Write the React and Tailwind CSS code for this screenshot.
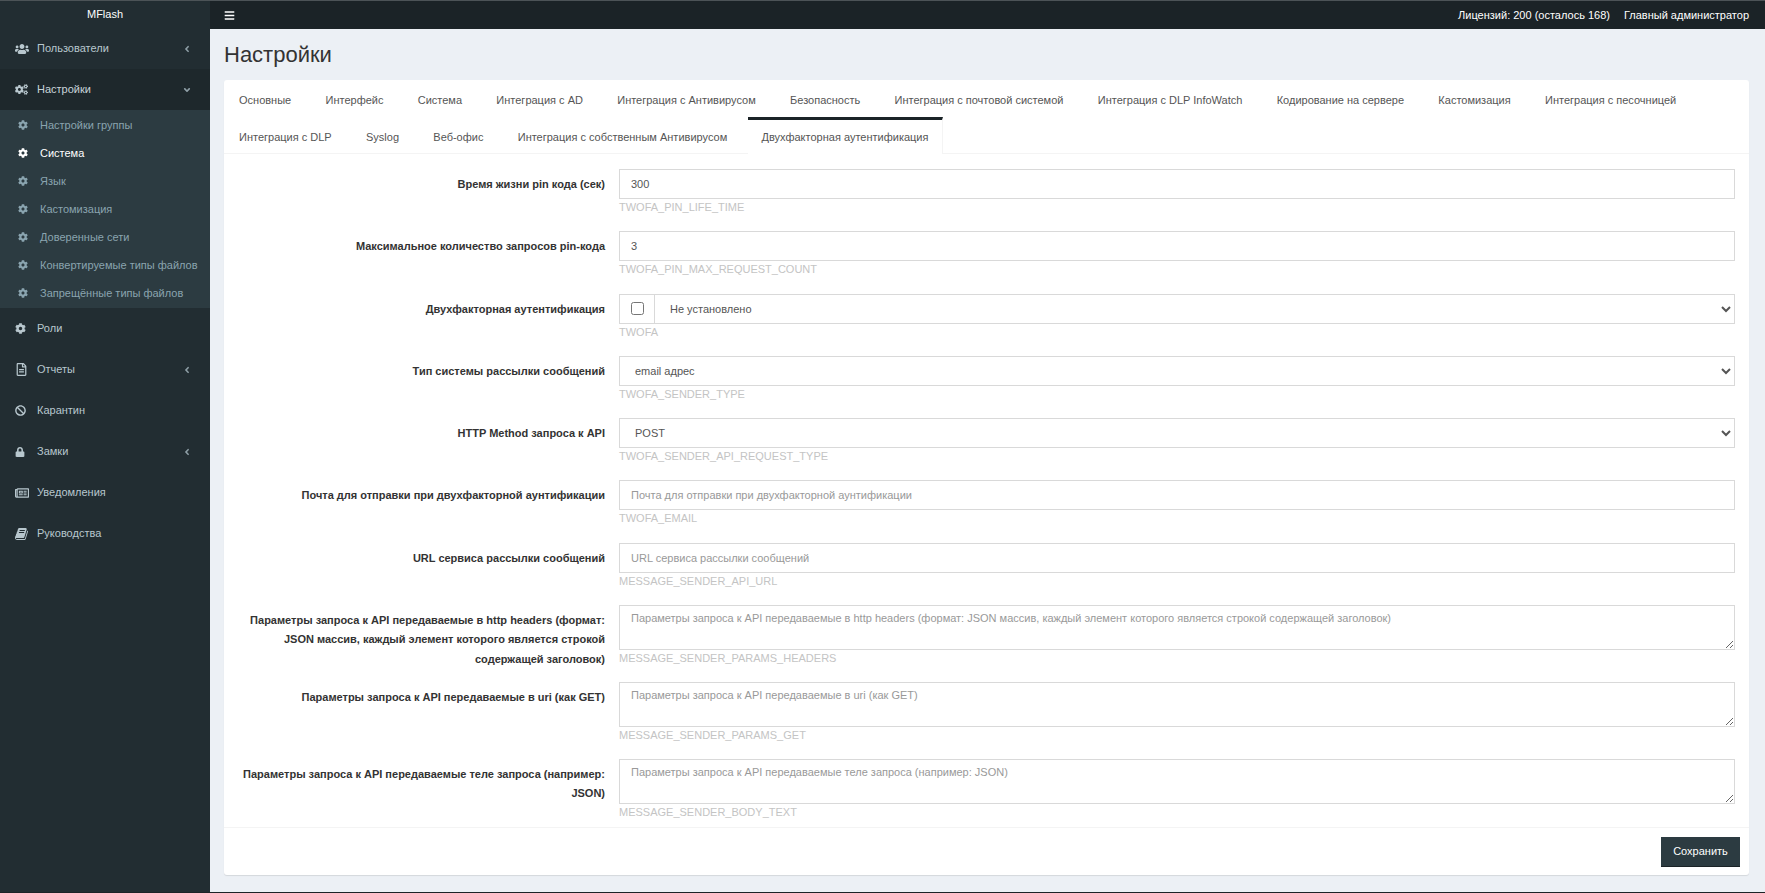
import { FaUsers, FaCogs, FaCog, FaRegFileAlt, FaBan, FaLock, FaRegNewspaper, FaBars, FaAngleLeft, FaAngleDown } from 'react-icons/fa'

// slanted book, the react-icons one is upright
function BookIcon({ size }) {
  return (
    <svg width={size} height={size} viewBox="0 0 1792 1792" fill="currentColor">
      <path d="M1639 478q40 57 18 129l-275 906q-19 64-76.5 107.5t-122.5 43.5h-923q-77 0-148.5-53.5t-99.5-131.5q-24-67-2-127 0-4 3-27t4-37q1-8-3-21.5t-3-19.5q2-11 8-21t16.5-23.5 16.5-23.5q23-38 45-91.5t30-91.5q3-10 .5-30t-.5-28q3-11 17-28t17-23q21-36 42-92t25-90q1-9-2.5-32t.5-28q4-13 22-30.5t22-22.5q19-26 42.5-84.5t27.5-96.5q1-8-3-25.5t-2-26.5q2-8 9-18t18-23 17-21q8-12 16.5-30.5t15-35 16-36 19.5-32 26.5-23.5 36-11.5 47.5 5.5l-1 3q38-9 51-9h761q74 0 114 56t18 130l-274 906q-36 119-71.5 153.5t-128.5 34.5h-869q-27 0-38 15-11 16-1 43 24 70 144 70h923q29 0 56-15.5t35-41.5l300-987q7-22 5-57 38 15 59 43zm-1064 2q-4 13 2 22.5t20 9.5h608q13 0 25.5-9.5t16.5-22.5l21-64q4-13-2-22.5t-20-9.5h-608q-13 0-25.5 9.5t-16.5 22.5zm-83 256q-4 13 2 22.5t20 9.5h608q13 0 25.5-9.5t16.5-22.5l21-64q4-13-2-22.5t-20-9.5h-608q-13 0-25.5 9.5t-16.5 22.5z" />
    </svg>
  )
}

const subItems = [
  { label: 'Настройки группы' },
  { label: 'Система', active: true },
  { label: 'Язык' },
  { label: 'Кастомизация' },
  { label: 'Доверенные сети' },
  { label: 'Конвертируемые типы файлов' },
  { label: 'Запрещённые типы файлов' },
]

const menuBottom = [
  { label: 'Роли', icon: FaCog, size: 11 },
  { label: 'Отчеты', icon: FaRegFileAlt, arrow: true, size: 13 },
  { label: 'Карантин', icon: FaBan, size: 11 },
  { label: 'Замки', icon: FaLock, arrow: true, size: 10 },
  { label: 'Уведомления', icon: FaRegNewspaper, size: 14 },
  { label: 'Руководства', icon: BookIcon, size: 14 },
]

const tabRow1 = ['Основные', 'Интерфейс', 'Система', 'Интеграция с AD', 'Интеграция с Антивирусом', 'Безопасность', 'Интеграция с почтовой системой', 'Интеграция с DLP InfoWatch', 'Кодирование на сервере', 'Кастомизация', 'Интеграция с песочницей']
const tabRow2 = ['Интеграция с DLP', 'Syslog', 'Веб-офис', 'Интеграция с собственным Антивирусом']

function MenuItem({ icon: Icon, label, arrow, open, size = 13 }) {
  return (
    <div className={`h-[41px] flex items-center pl-[15px] pr-[15px] text-[11px] text-[#b8c7ce] ${open ? 'bg-[#1e282c]' : ''}`}>
      <span className="w-[22px] flex"><Icon size={size} /></span>
      <span className={open ? 'text-[#c8d4da]' : ''}>{label}</span>
      {arrow && <span className="ml-auto mr-[3px] text-[#8f9fa7]">{open ? <FaAngleDown size={10} /> : <FaAngleLeft size={10} />}</span>}
    </div>
  )
}

function Sidebar() {
  return (
    <aside className="w-[210px] shrink-0 bg-[#222d32] flex flex-col">
      <div className="h-[27px] flex items-center justify-center text-white text-[11px]">MFlash</div>
      <MenuItem icon={FaUsers} label="Пользователи" arrow size={14} />
      <MenuItem icon={FaCogs} label="Настройки" arrow open />
      <div className="bg-[#2c3b41] h-[198px] flex flex-col py-px">
        {subItems.map(item => (
          <div key={item.label} className={`flex-1 flex items-center pl-[18px] text-[11px] ${item.active ? 'text-white' : 'text-[#8aa4af]'}`}>
            <span className="w-[22px] flex"><FaCog size={10} /></span>
            <span>{item.label}</span>
          </div>
        ))}
      </div>
      {menuBottom.map(item => <MenuItem key={item.label} {...item} />)}
    </aside>
  )
}

function Field({ label, help, children, tall }) {
  return (
    <div className={`flex ${tall ? 'h-[77px]' : 'h-[62.25px]'}`}>
      <label className="w-[395px] shrink-0 pl-[14px] pr-[14px] pt-[6px] text-right text-[11px] font-bold leading-[19.5px] text-[#333]">{label}</label>
      <div className="flex-1 min-w-0 mr-[14px]">
        {children}
        <div className="text-[11px] leading-[17px] text-[#c4c4c4]">{help}</div>
      </div>
    </div>
  )
}

const controlClass = 'w-full h-[30px] border border-[#d9d9d9] px-[11px] text-[11px] text-[#555] bg-white outline-none placeholder:text-[#999]'

function TextField({ label, help, value, placeholder }) {
  return (
    <Field label={label} help={help}>
      <input className={controlClass} defaultValue={value} placeholder={placeholder} />
    </Field>
  )
}

function SelectField({ label, help, value }) {
  return (
    <Field label={label} help={help}>
      <select className={controlClass} defaultValue={value}>
        <option>{value}</option>
      </select>
    </Field>
  )
}

function AreaField({ label, help }) {
  return (
    <Field label={label} help={help} tall>
      <textarea className="block w-full h-[45px] border border-[#d9d9d9] px-[11px] py-[4px] text-[11px] text-[#555] bg-white outline-none placeholder:text-[#999]" placeholder={label} />
    </Field>
  )
}

export default function App() {
  return (
    <div className="h-[893px] flex flex-col overflow-hidden bg-[#ecf0f5] border-t border-b border-t-[#4c5357] border-b-[#1c2327] font-['Liberation_Sans',Arial,sans-serif]">
      <div className="flex flex-1 min-h-0">
        <Sidebar />
        <main className="flex-1 min-w-0 flex flex-col">
          <header className="h-[28px] shrink-0 bg-[#1b2327] flex items-center text-white text-[11px] pl-[14px] pr-4">
            <FaBars size={11} />
            <span className="ml-auto">Лицензий: 200 (осталось 168)</span>
            <span className="ml-[14px]">Главный администратор</span>
          </header>
          <div className="flex-1 min-h-0 pl-[14px] pr-4 flex flex-col">
            <h1 className="h-[51px] shrink-0 flex items-center text-[22px] text-[#333]">Настройки</h1>
            <div className="h-[795px] shrink-0 bg-white rounded-[3px] shadow-[0_1px_1px_rgba(0,0,0,0.1)] flex flex-col">
              <div className="h-[74px] shrink-0 border-b border-[#f4f4f4]">
                <div className="h-[37px] flex gap-[34.3px] px-[15px] pt-[12px] text-[11px] text-[#555]">
                  {tabRow1.map(t => <div key={t}>{t}</div>)}
                </div>
                <div className="h-[37px] flex gap-[34.3px] pl-[15px] text-[11px] text-[#555]">
                  {tabRow2.map(t => <div key={t} className="pt-[12px]">{t}</div>)}
                  <div className="-ml-[14px] bg-white border-t-[3px] border-t-[#1b2327] border-r border-r-[#f4f4f4] h-[37px] px-[14px] pt-[9px]">Двухфакторная аутентификация</div>
                </div>
              </div>
              <form className="flex-1 min-h-0 pt-[15px]">
                <TextField label="Время жизни pin кода (сек)" help="TWOFA_PIN_LIFE_TIME" value="300" />
                <TextField label="Максимальное количество запросов pin-кода" help="TWOFA_PIN_MAX_REQUEST_COUNT" value="3" />
                <Field label="Двухфакторная аутентификация" help="TWOFA">
                  <div className="flex h-[30px] border border-[#d9d9d9]">
                    <div className="w-[35px] shrink-0 flex items-center justify-center border-r border-[#d9d9d9]">
                      <input type="checkbox" className="w-[13px] h-[13px]" />
                    </div>
                    <select className="flex-1 min-w-0 pl-[11px] text-[11px] text-[#555] bg-white outline-none" defaultValue="Не установлено">
                      <option>Не установлено</option>
                    </select>
                  </div>
                </Field>
                <SelectField label="Тип системы рассылки сообщений" help="TWOFA_SENDER_TYPE" value="email адрес" />
                <SelectField label="HTTP Method запроса к API" help="TWOFA_SENDER_API_REQUEST_TYPE" value="POST" />
                <TextField label="Почта для отправки при двухфакторной аунтификации" help="TWOFA_EMAIL" placeholder="Почта для отправки при двухфакторной аунтификации" />
                <TextField label="URL сервиса рассылки сообщений" help="MESSAGE_SENDER_API_URL" placeholder="URL сервиса рассылки сообщений" />
                <AreaField label="Параметры запроса к API передаваемые в http headers (формат: JSON массив, каждый элемент которого является строкой содержащей заголовок)" help="MESSAGE_SENDER_PARAMS_HEADERS" />
                <AreaField label="Параметры запроса к API передаваемые в uri (как GET)" help="MESSAGE_SENDER_PARAMS_GET" />
                <AreaField label="Параметры запроса к API передаваемые теле запроса (например: JSON)" help="MESSAGE_SENDER_BODY_TEXT" />
              </form>
              <div className="h-[48px] shrink-0 border-t border-[#f4f4f4] flex justify-end items-start pt-[9px] pr-[9px]">
                <button className="h-[30px] w-[79px] bg-[#2c3b41] border-b border-[#1b2327] text-white text-[11px]">Сохранить</button>
              </div>
            </div>
          </div>
        </main>
      </div>
    </div>
  )
}
